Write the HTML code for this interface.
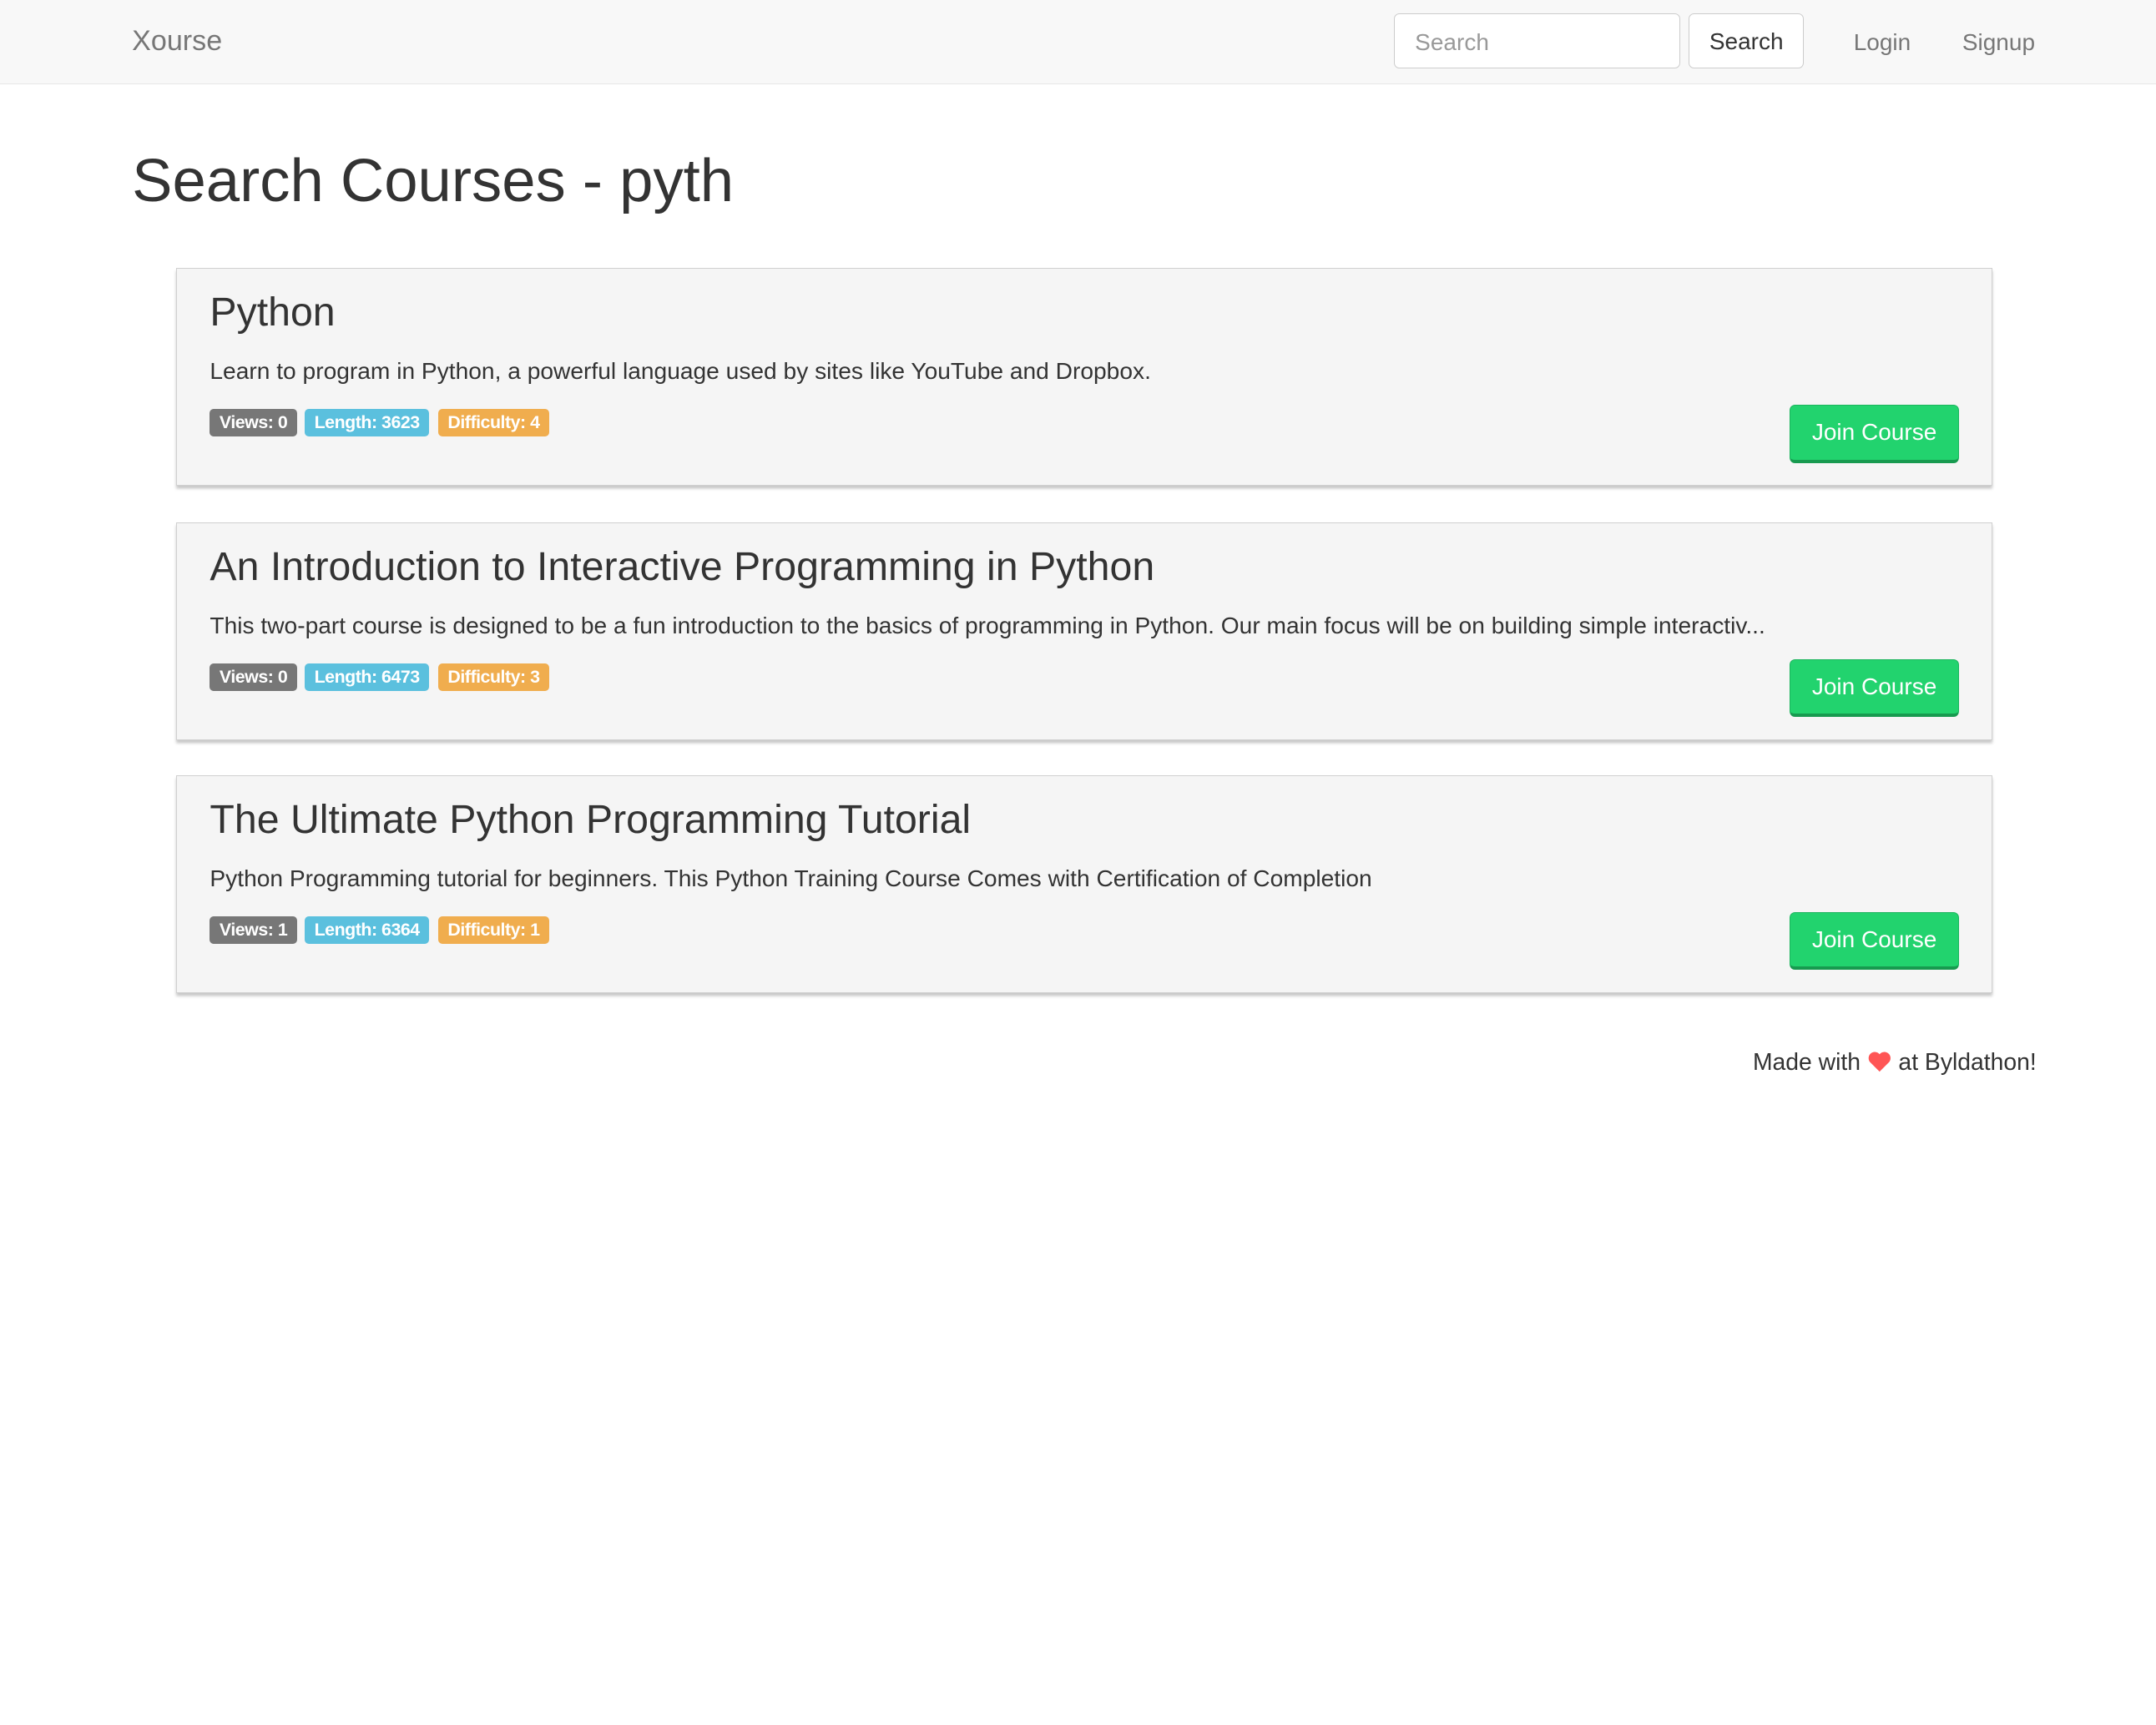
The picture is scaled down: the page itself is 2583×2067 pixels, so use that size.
<!DOCTYPE html>
<html><head><meta charset="utf-8"><style>
html,body{margin:0;padding:0;background:#fff;}
body{width:2583px;height:2067px;overflow:hidden;font-family:"Liberation Sans",Arial,sans-serif;}
#w{zoom:1.6474;position:relative;width:1568px;height:1255px;color:#333;}
.a{position:absolute;white-space:nowrap;}
.nav{position:absolute;left:0;top:0;width:1568px;height:61px;background:#f8f8f8;border-bottom:1px solid #e7e7e7;}
.card{position:absolute;left:128px;width:1320px;height:157px;background:#f5f5f5;border:1px solid #d0d0d0;box-shadow:0 2px 2px #c8c8c8;}
.card h3{position:absolute;left:24px;top:12px;margin:0;font-weight:normal;font-size:29.3px;line-height:40px;color:#333;}
.card p{position:absolute;left:24px;top:63px;margin:0;font-size:17.1px;line-height:22px;color:#333;}
.bd{position:absolute;top:102px;height:20px;line-height:20px;font-size:13px;font-weight:bold;color:#fff;border-radius:3px;padding:0 7px;letter-spacing:-0.3px}
.btn{position:absolute;left:1173px;top:99px;width:123px;height:42px;background:#22d36e;border:1px solid #1bb55d;border-bottom:3px solid #179a4f;border-radius:4px;color:#fff;font-size:17px;text-align:center;box-sizing:border-box;line-height:39px}
</style></head><body><div id="w">
<div class="nav">
<div class="a" style="left:96px;top:18px;font-size:20.7px;color:#777;">Xourse</div>
<div class="a" style="left:1014px;top:10px;width:208px;height:40px;box-sizing:border-box;border:1px solid #ccc;border-radius:4px;background:#fff;"></div>
<div class="a" style="left:1029px;top:21px;font-size:17px;color:#999;">Search</div>
<div class="a" style="left:1228px;top:10px;width:84px;height:40px;box-sizing:border-box;border:1px solid #ccc;border-radius:4px;background:#fff;text-align:center;line-height:40px;font-size:17px;color:#333;">Search</div>
<div class="a" style="left:1348px;top:21px;font-size:17px;color:#777;">Login</div>
<div class="a" style="left:1427px;top:21px;font-size:17px;color:#777;">Signup</div>
</div>
<div class="a" style="left:96px;top:105px;font-size:44px;line-height:54px;color:#333;">Search Courses - pyth</div>

<div class="card" style="top:195px;">
<h3>Python</h3>
<p>Learn to program in Python, a powerful language used by sites like YouTube and Dropbox.</p>
<span class="bd" style="left:24px;background:#777;">Views: 0</span>
<span class="bd" style="left:93px;background:#5bc0de;">Length: 3623</span>
<span class="bd" style="left:190px;background:#f0ad4e;">Difficulty: 4</span>
<div class="btn">Join Course</div>
</div>

<div class="card" style="top:380px;">
<h3>An Introduction to Interactive Programming in Python</h3>
<p>This two-part course is designed to be a fun introduction to the basics of programming in Python. Our main focus will be on building simple interactiv...</p>
<span class="bd" style="left:24px;background:#777;">Views: 0</span>
<span class="bd" style="left:93px;background:#5bc0de;">Length: 6473</span>
<span class="bd" style="left:190px;background:#f0ad4e;">Difficulty: 3</span>
<div class="btn">Join Course</div>
</div>

<div class="card" style="top:564px;">
<h3>The Ultimate Python Programming Tutorial</h3>
<p>Python Programming tutorial for beginners. This Python Training Course Comes with Certification of Completion</p>
<span class="bd" style="left:24px;background:#777;">Views: 1</span>
<span class="bd" style="left:93px;background:#5bc0de;">Length: 6364</span>
<span class="bd" style="left:190px;background:#f0ad4e;">Difficulty: 1</span>
<div class="btn">Join Course</div>
</div>

<div class="a" style="right:87px;top:763px;font-size:17.2px;color:#333;">Made with <svg width="18" height="16" viewBox="0 0 24 22" style="vertical-align:-2px"><path d="M12 21 L2.5 11.5 A5.5 5.5 0 0 1 12 3.5 A5.5 5.5 0 0 1 21.5 11.5 Z" fill="#f55"/></svg> at Byldathon!</div>
</div></body></html>
